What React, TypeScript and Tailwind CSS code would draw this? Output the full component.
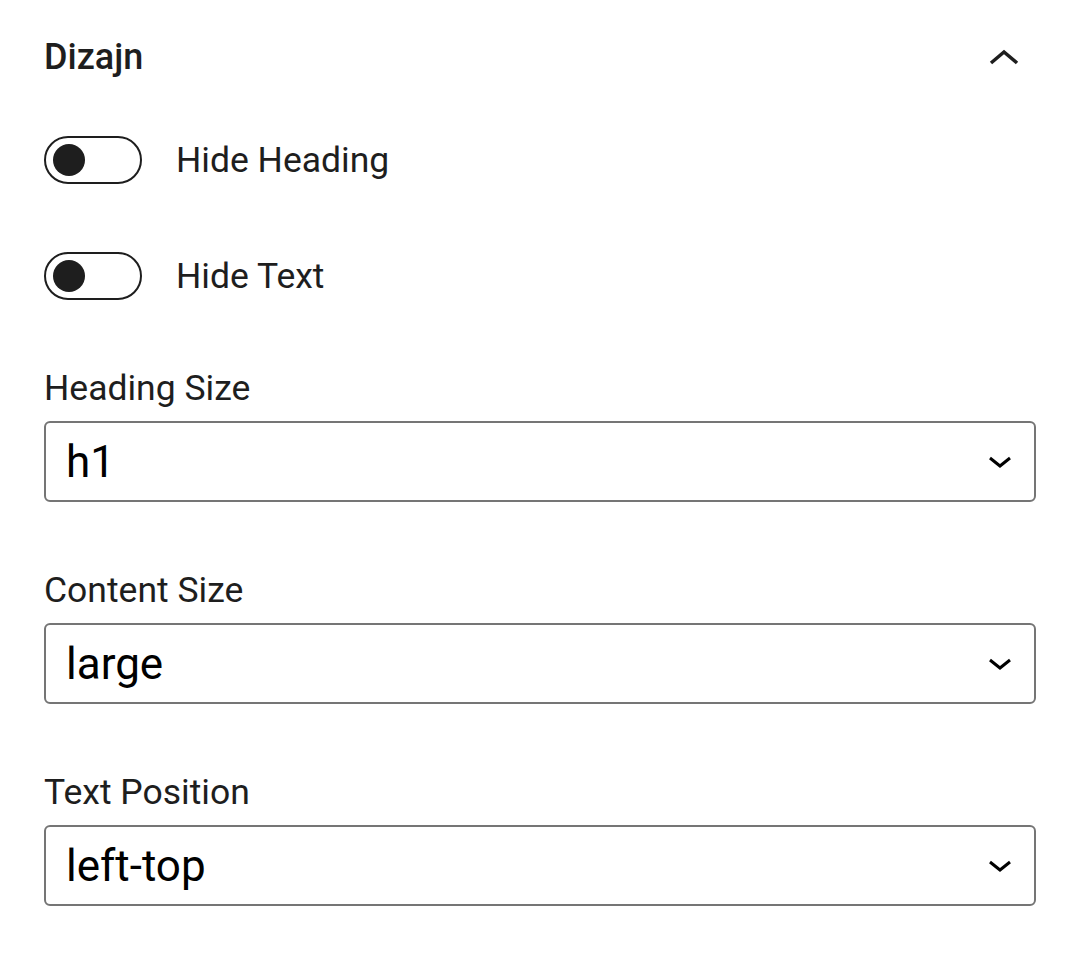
import React from "react";

function Toggle({ label }: { label: string }) {
  return (
    <div className="flex items-center">
      <div className="flex h-[48px] w-[98px] items-center rounded-full border-2 border-[#1e1e1e] bg-white pl-[7px]">
        <span className="h-[32px] w-[32px] rounded-full bg-[#1e1e1e]" />
      </div>
      <span className="ml-[34px] text-[35.5px] leading-[40px] text-[#1e1e1e]">{label}</span>
    </div>
  );
}

function SelectField({ label, value }: { label: string; value: string }) {
  return (
    <div>
      <div className="text-[35.5px] leading-[42px] text-[#1e1e1e]">{label}</div>
      <div className="mt-[12px] flex h-[81px] items-center justify-between rounded-[6px] border-2 border-[#757575] bg-white pl-[20px] pr-[22px]">
        <span className="text-[44px] leading-none text-black">{value}</span>
        <svg width="24" height="12" viewBox="0 0 24 12" fill="none">
          <path d="M2 2 L12 10 L22 2" stroke="#000" strokeWidth="3" />
        </svg>
      </div>
    </div>
  );
}

export default function App() {
  return (
    <div className="min-h-screen bg-white px-[44px] pt-[30px] [font-family:Roboto,'Liberation_Sans',sans-serif]">
      {/* Panel header */}
      <div className="flex h-[54px] items-center justify-between">
        <h2 className="text-[36px] font-medium text-[#1e1e1e]">Dizajn</h2>
        <svg className="mr-[17px]" width="30" height="16" viewBox="0 0 30 16" fill="none">
          <path d="M2 14 L15 3 L28 14" stroke="#1e1e1e" strokeWidth="3.5" />
        </svg>
      </div>

      <div className="mt-[52px]">
        <Toggle label="Hide Heading" />
      </div>
      <div className="mt-[68px]">
        <Toggle label="Hide Text" />
      </div>

      <div className="mt-[67px]">
        <SelectField label="Heading Size" value="h1" />
      </div>
      <div className="mt-[67px]">
        <SelectField label="Content Size" value="large" />
      </div>
      <div className="mt-[67px]">
        <SelectField label="Text Position" value="left-top" />
      </div>
    </div>
  );
}
